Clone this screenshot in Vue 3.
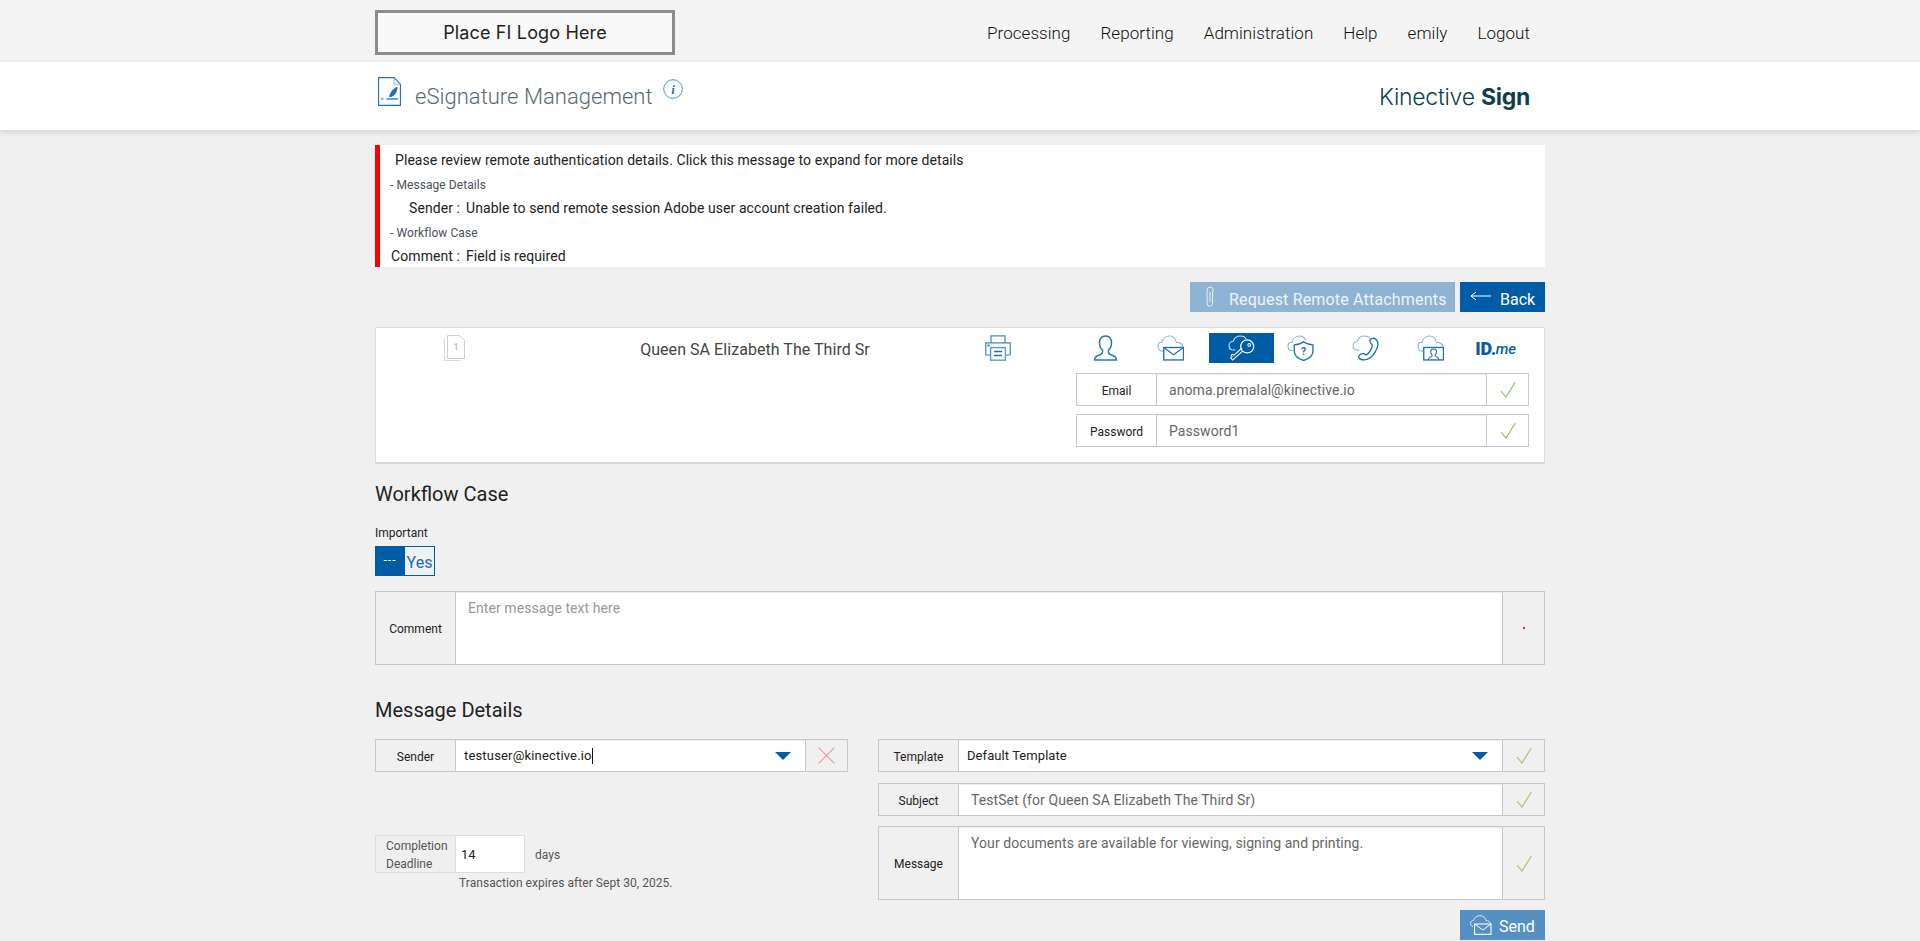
<script setup>
const navItems = ['Processing', 'Reporting', 'Administration', 'Help', 'emily', 'Logout']
</script>

<template>
  <div class="page">
    <div class="topbar">
      <div class="wrap topbar-in">
        <div class="logo">Place FI Logo Here</div>
        <nav class="nav"><a v-for="n in navItems" :key="n">{{ n }}</a></nav>
      </div>
    </div>

    <header class="head">
      <div class="wrap head-in">
        <svg class="title-ic" viewBox="0 0 23 29" fill="none">
          <path d="M.6.6h15.500l6.300 6.600v21.200H.6z" stroke="#1f6fb5" stroke-width="1.100"/>
          <path d="M16 .6v6.600h6.400" stroke="#7fb0da" stroke-width=".9"/>
          <path d="M8.500 22h11.500" stroke="#1f6fb5" stroke-width="1.300"/>
          <path d="M3 20.500l2.500 2.500M5.500 20.500L3 23" stroke="#1f6fb5" stroke-width=".7"/>
          <path d="M11 20.500c.5-4 3-8.500 8.500-11 0 5-2 8.500-6 10.500l-1.300-.3z" fill="#1f6fb5"/>
        </svg>
        <h1 class="title">eSignature Management</h1>
        <svg class="info" viewBox="0 0 20 20" fill="none">
          <circle cx="10" cy="10" r="9.300" stroke="#4a94cc" stroke-width="1"/>
          <text x="10" y="14.500" text-anchor="middle" class="info-t">i</text>
        </svg>
        <div class="brand">Kinective <b>Sign</b></div>
      </div>
    </header>

    <main class="wrap">
      <section class="alert">
        <div class="a-main">Please review remote authentication details. Click this message to expand for more details</div>
        <div class="a-group">- Message Details</div>
        <div class="a-row"><span class="a-label">Sender :</span><span>Unable to send remote session Adobe user account creation failed.</span></div>
        <div class="a-group">- Workflow Case</div>
        <div class="a-row"><span class="a-label">Comment :</span><span>Field is required</span></div>
      </section>

      <div class="actions">
        <button class="btn btn-req">
          <svg class="clip" viewBox="0 0 10 22" fill="none"><path d="M7.500 6v11.500a2.700 2.700 0 0 1-5.400 0V4a3 3 0 0 1 6 0v2" stroke="#e6eff7" stroke-width="1"/><path d="M5 6v10" stroke="#e6eff7" stroke-width="1"/></svg>
          Request Remote Attachments
        </button>
        <button class="btn btn-back">
          <svg class="arrow" viewBox="0 0 21 10" fill="none"><path d="M21 5H1M6 1L1 5l5 4" stroke="#fff" stroke-width="1"/></svg>
          Back
        </button>
      </div>

      <section class="card">
        <div class="doc-col">
          <svg class="pages" viewBox="0 0 21 26" fill="none">
            <path d="M.5 3.500v22h16" stroke="#d8d8d8" stroke-width="1"/>
            <path d="M3.500.5h12l5 5v18h-17z" stroke="#cfcfcf" stroke-width="1"/>
            <text x="12" y="15" text-anchor="middle" class="page-n">1</text>
          </svg>
        </div>
        <div class="name-col">Queen SA Elizabeth The Third Sr</div>
        <div class="print-col">
          <svg class="printer" viewBox="0 0 26 26" fill="none">
            <path d="M6 8V.8h14V8" stroke="#3d86c4" stroke-width="1.200"/>
            <path d="M5 20H.8V7.800h24.400V20H21" stroke="#3d86c4" stroke-width="1.200"/>
            <rect x="5.600" y="12.600" width="14.800" height="12.600" fill="#fff" stroke="#5d9bcf" stroke-width="1.400"/>
            <path d="M9 16.500h8M9 20.500h8" stroke="#1f6fb5" stroke-width="1.500"/>
            <rect x="2.500" y="9.500" width="2" height="2" fill="#2f7cc0"/>
          </svg>
        </div>
        <div class="auth-col">
          <div class="tabs">
            <div class="tab">
              <svg class="t-ic" viewBox="0 0 24 26" fill="none"><path d="M12 1C8 1 6 4 6 8c0 3 1 5.500 3 7v2c0 1.500-1 2.300-3 3-3 1-5 2-5 5h22c0-3-2-4-5-5-2-.7-3-1.500-3-3v-2c2-1.500 3-4 3-7 0-4-2-7-6-7z" stroke="#2a75b8" stroke-width="1.500"/></svg>
            </div>
            <div class="tab">
              <svg class="t-ic" viewBox="0 0 26 25" fill="none">
                <path d="M6 15.500H4.500C2 15 1 13 1 10.800 1 8.500 2.600 7 4.800 7 5.500 3.500 8.500 1 12 1c3.500 0 6 2.500 6.500 6 3.500 0 6 1.500 6.500 4.500" stroke="#7fb2dc" stroke-width="1"/>
                <rect x="6.500" y="12" width="19" height="12" fill="#fff" stroke="#1f6fb5" stroke-width="1.300"/>
                <path d="M6.500 12l9.500 7 9.500-7" stroke="#1f6fb5" stroke-width="1.200"/>
              </svg>
            </div>
            <div class="tab tab-on">
              <svg class="t-ic" viewBox="0 0 26 25" fill="none">
                <path d="M7 14.500H5.500C2.500 14.500 1 12.500 1 10 1 7.500 3 6 5 6c1-3 3.500-5 7-5 2.500 0 4.500 1 5.500 3" stroke="#cfe0ef" stroke-width="1"/>
                <circle cx="18.500" cy="11" r="6.300" stroke="#fff" stroke-width="1.200"/>
                <circle cx="20.500" cy="9.500" r="1.400" stroke="#fff" stroke-width="1"/>
                <path d="M14 15.500L4.500 24 2.500 22l1.500-1.500-1-1 1.500-1 1 1 8-7" stroke="#fff" stroke-width="1"/>
              </svg>
            </div>
            <div class="tab">
              <svg class="t-ic" viewBox="0 0 26 25" fill="none">
                <path d="M6 15H4.500C2 15 1 13 1 10.500 1 8.500 2.600 7 4.800 7 5.500 3.500 8.500 1 12 1c2.500 0 5 1.500 6 4" stroke="#7fb2dc" stroke-width="1"/>
                <path d="M16 6.500c2.500 2 5.500 2.800 9 3v6c0 4-3.500 7.500-9 9-5.500-1.500-9-5-9-9v-6c3.500-.2 6.500-1 9-3z" fill="#fff" stroke="#1f6fb5" stroke-width="1.300"/>
                <text x="16" y="19.500" text-anchor="middle" class="q">?</text>
              </svg>
            </div>
            <div class="tab">
              <svg class="t-ic" viewBox="0 0 26 25" fill="none">
                <path d="M7 14.500H5C2.500 14.500 1 12.500 1 10.200 1 7.800 3 6.500 4.800 6.500 5.800 3 8.500 1 12 1c2.500 0 4.800 1 6 3" stroke="#7fb2dc" stroke-width="1"/>
                <path d="M17.500 4.500c1.500-1.200 4-1.800 5.500-.5 2.500 2.500 2.500 7-.5 12-2.800 5-7 8-11 8-3 0-5.500-1.600-5-3.500.4-1.600 3-3 5-2.500 1 .3 1 1.500 2.500.8 2.500-1.300 4.500-5 5.500-8 .4-1.500-.5-1.800-1.500-3-.5-.8-1.300-2-.5-2.800z" stroke="#1f6fb5" stroke-width="1.300"/>
              </svg>
            </div>
            <div class="tab">
              <svg class="t-ic" viewBox="0 0 26 25" fill="none">
                <path d="M6 15.500H4.500C2 15 1 13 1 10.800 1 8.500 2.600 7 4.800 7 5.500 3.500 8.500 1 12 1c3.500 0 6 2.500 6.500 6 3.500 0 6 1.500 6.500 4.500" stroke="#7fb2dc" stroke-width="1"/>
                <rect x="6.500" y="12" width="19" height="12" fill="#fff" stroke="#1f6fb5" stroke-width="1.300"/>
                <path d="M11 24c0-2.500 1.500-3 3.500-3.700v-1.300c-1-.8-1.300-1.700-1.300-3 0-1.500 1-2.500 2.800-2.500s2.800 1 2.800 2.500c0 1.300-.3 2.200-1.300 3v1.300c2 .7 3.500 1.200 3.500 3.700" stroke="#1f6fb5" stroke-width="1"/>
              </svg>
            </div>
            <div class="tab idme"><b>ID.</b><i>me</i></div>
          </div>
          <div class="row">
            <div class="r-label">Email</div>
            <div class="r-val">anoma.premalal@kinective.io</div>
            <div class="r-mark">
              <svg class="check" viewBox="0 0 16 17" fill="none"><path d="M1 10l5 6L15.300 1" stroke="#8cc05c" stroke-width="1.100"/></svg>
            </div>
          </div>
          <div class="row row-2">
            <div class="r-label">Password</div>
            <div class="r-val">Password1</div>
            <div class="r-mark">
              <svg class="check" viewBox="0 0 16 17" fill="none"><path d="M1 10l5 6L15.300 1" stroke="#8cc05c" stroke-width="1.100"/></svg>
            </div>
          </div>
        </div>
      </section>

      <h2 class="h-case">Workflow Case</h2>
      <div class="imp">Important</div>
      <div class="toggle"><span class="t-off">---</span><span class="t-yes">Yes</span></div>
      <div class="row grey comment">
        <div class="r-label">Comment</div>
        <div class="r-val area placeholder">Enter message text here</div>
        <div class="r-mark"><span class="req"></span></div>
      </div>

      <h2 class="h-msg">Message Details</h2>
      <div class="cols">
        <div class="col-l">
          <div class="row grey">
            <div class="r-label">Sender</div>
            <div class="r-val sel sender"><span>testuser@kinective.io</span><span class="caret"></span><span class="drop"></span></div>
            <div class="r-mark">
              <svg class="cross" viewBox="0 0 17 17" fill="none"><path d="M.6.6l15.800 15.800M16.400.6L.6 16.400" stroke="#e8949c" stroke-width="1.100"/></svg>
            </div>
          </div>
          <div class="deadline">
            <div class="d-label">Completion Deadline</div>
            <div class="d-input">14</div>
            <div class="d-days">days</div>
          </div>
          <div class="expire">Transaction expires after Sept 30, 2025.</div>
        </div>
        <div class="col-r">
          <div class="row grey">
            <div class="r-label">Template</div>
            <div class="r-val sel tpl"><span>Default Template</span><span class="drop"></span></div>
            <div class="r-mark">
              <svg class="check" viewBox="0 0 16 17" fill="none"><path d="M1 10l5 6L15.300 1" stroke="#a8bb6a" stroke-width="1.100"/></svg>
            </div>
          </div>
          <div class="row grey gap-s">
            <div class="r-label">Subject</div>
            <div class="r-val">TestSet (for Queen SA Elizabeth The Third Sr)</div>
            <div class="r-mark">
              <svg class="check" viewBox="0 0 16 17" fill="none"><path d="M1 10l5 6L15.300 1" stroke="#a8bb6a" stroke-width="1.100"/></svg>
            </div>
          </div>
          <div class="row grey message">
            <div class="r-label">Message</div>
            <div class="r-val area">Your documents are available for viewing, signing and printing.</div>
            <div class="r-mark">
              <svg class="check" viewBox="0 0 16 17" fill="none"><path d="M1 10l5 6L15.300 1" stroke="#a8bb6a" stroke-width="1.100"/></svg>
            </div>
          </div>
          <div class="send-wrap">
            <button class="btn btn-send">
              <svg class="send-ic" viewBox="0 0 22 20" fill="none">
                <path d="M3 11.500C1 11 .6 9.500.6 8.300.6 6.500 2 5.300 3.500 5.300 4.500 2.500 7 .6 10 .6c3 0 5.500 2 6 5 2 .1 4 1 4.500 2.800" stroke="#d9e8f4" stroke-width="1"/>
                <rect x="4.600" y="9" width="16.400" height="10.300" fill="#5590c2" stroke="#fff" stroke-width="1.100"/>
                <path d="M4.600 9l8.200 6 8.200-6" stroke="#fff" stroke-width="1"/>
              </svg>
              Send
            </button>
          </div>
        </div>
      </div>
    </main>
  </div>
</template>

<style>
html, body { margin: 0; height: 100%; overflow: hidden; background: #f0f0f0; }
</style>

<style scoped>
.page { font-family: Roboto, "Liberation Sans", sans-serif; color: #222; background: #f0f0f0; height: 941px; overflow: hidden; }
.wrap { width: 1170px; margin: 0 auto; }
.topbar { background: #f4f4f4; height: 62px; }
.topbar-in { display: flex; align-items: center; justify-content: space-between; height: 65px; }
.logo { width: 300px; height: 45px; box-sizing: border-box; border: 3px solid #8c8c8c; background: #f9f9f9; font: 18px/39px Inter, sans-serif; letter-spacing: .15px; text-align: center; color: #222; }
.nav { display: flex; gap: 30px; padding-right: 15px; font-size: 17px; font-weight: 300; color: #111; letter-spacing: .05px; }
.head { background: #fff; height: 68px; box-shadow: 0 2px 6px rgba(0, 0, 0, .14); position: relative; }
.head-in { display: flex; align-items: flex-start; height: 68px; }
.title-ic { width: 23px; height: 29px; margin: 15px 0 0 3px; }
.title { margin: 17px 0 0 14px; font-size: 22px; line-height: 36px; font-weight: 300; color: #5a6a75; letter-spacing: .03px; }
.info { width: 20px; height: 20px; margin: 17px 0 0 10px; }
.info-t { font: italic 700 13px "Liberation Serif", serif; fill: #1f6fb5; }
.brand { margin: 18px 15px 0 auto; font: 300 23px/34px Inter, sans-serif; color: #0e3f4a; letter-spacing: -.27px; }
.brand b { font-weight: 700; }

.alert { margin-top: 15px; height: 122px; box-sizing: border-box; border-left: 5px solid #f00; background: #fff; padding-top: 3px; overflow: hidden; line-height: 24px; font-size: 14px; color: #222; letter-spacing: .07px; }
.a-main { padding-left: 15px; }
.a-group { padding: 2px 0 0 10px; line-height: 22px; font-size: 12px; color: #4c5259; }
.a-row { display: flex; }
.a-label { width: 80px; margin-right: 6px; text-align: right; }

.actions { display: flex; justify-content: flex-end; gap: 5px; margin-top: 15px; }
.btn { height: 30px; border: 0; padding: 2px 0 0; font: 16px Roboto, sans-serif; color: #fff; display: flex; align-items: center; }
.actions .btn { padding-top: 4px; }
.btn-req { width: 265px; background: #8fb4d3; color: #edf3f8; padding-left: 15px; letter-spacing: .18px; }
.clip { width: 10px; height: 22px; margin: -4px 14px 0 0; }
.btn-back { width: 85px; background: #005ca6; padding-left: 10px; }
.arrow { width: 21px; height: 10px; margin: -6px 9px 0 0; }

.card { display: flex; height: 137px; box-sizing: border-box; margin-top: 15px; padding-top: 5px; border: 1px solid #dcdcdc; border-bottom: 2px solid #d8d8d8; background: #fff; }
.doc-col { width: 157px; display: flex; justify-content: center; padding-top: 2px; box-sizing: border-box; }
.pages { width: 21px; height: 26px; }
.page-n { font: 700 9px Roboto, sans-serif; fill: #c4c4c4; }
.name-col { width: 444px; text-align: center; font-size: 16px; line-height: 34px; color: #444; letter-spacing: .05px; }
.print-col { width: 99px; box-sizing: border-box; padding: 2px 0 0 8px; }
.printer { width: 26px; height: 26px; }
.auth-col { width: 453px; }
.tabs { display: flex; margin-left: 3px; }
.tab { flex: none; width: 65px; height: 30px; box-sizing: border-box; padding-right: 12px; display: flex; align-items: center; justify-content: center; }
.t-ic { width: 27px; height: 26px; }
.tab-on { background: #005ca6; padding-right: 0; }
.q { font: 700 10px Roboto, sans-serif; fill: #1f6fb5; }
.idme { color: #0a5ca8; font-size: 18px; line-height: 20px; letter-spacing: -.3px; padding-top: 2px; }
.idme b { font-weight: 900; }
.idme i { font-size: 15px; font-weight: 500; }

.row { display: flex; height: 33px; box-sizing: border-box; border: 1px solid #c8c8c8; background: #fff; margin-top: 10px; }
.row-2 { margin-top: 8px; }
.r-label { width: 79px; flex: none; box-sizing: content-box; border-right: 1px solid #c8c8c8; padding-top: 2px; display: flex; align-items: center; justify-content: center; font-size: 12px; color: #222; }
.r-val { flex: 1; min-width: 0; padding-left: 12px; font-size: 14px; line-height: 33px; letter-spacing: .07px; color: #666; box-shadow: inset 0 2px 1px -1px rgba(0, 0, 0, .08); background: #fff; }
.r-mark { width: 41px; flex: none; border-left: 1px solid #c8c8c8; display: flex; align-items: center; justify-content: center; }
.check { width: 16px; height: 17px; }
.grey { background: #f0f0f0; margin-top: 0; }

.h-case, .h-msg { margin: 14px 0 0; padding-top: 1px; font-size: 20px; line-height: 30px; font-weight: 400; color: #222; }
.h-msg { margin-top: 29px; }
.imp { margin-top: 16px; font-size: 12px; line-height: 16px; color: #222; }
.toggle { display: flex; width: 60px; height: 30px; margin-top: 5px; }
.t-off { width: 30px; background: #005ca6; color: #fff; font-size: 12px; letter-spacing: 1px; line-height: 28px; text-align: center; }
.t-yes { width: 30px; box-sizing: border-box; border: 1px solid #005ca6; border-left: 0; background: #f0f0f0; color: #1a6cb0; font-size: 16px; line-height: 32px; text-align: center; }
.comment { height: 74px; margin-top: 15px; }
.area { line-height: 22px; padding-top: 5px; }
.placeholder { color: #999; }
.req { width: 2px; height: 2px; background: #d8344a; }

.cols { display: flex; gap: 30px; margin-top: 14px; }
.col-l { width: 473px; }
.col-r { width: 667px; }
.sel { display: flex; align-items: center; font-size: 13px; color: #222; padding-right: 14px; }
.sender { padding-left: 8px; letter-spacing: .17px; }
.tpl { padding-left: 8px; font-size: 13px; }
.drop { margin-left: auto; width: 0; height: 0; border-left: 8px solid transparent; border-right: 8px solid transparent; border-top: 8px solid #005ca6; }
.caret { width: 1px; height: 16px; background: #111; }
.cross { width: 17px; height: 17px; }
.deadline { display: flex; margin-top: 63px; height: 38px; }
.d-label { width: 80px; box-sizing: border-box; border: 1px solid #dedede; border-right: 0; padding: 1px 0 0 10px; font-size: 12px; line-height: 18px; color: #555; background: #efefef; }
.d-input { width: 70px; box-sizing: border-box; border: 1px solid #dedede; background: #fff; padding-left: 5px; font-size: 13px; line-height: 38px; color: #222; }
.d-days { margin-left: 10px; font-size: 12px; line-height: 40px; color: #555; }
.expire { margin: 2px 0 0 84px; font-size: 12px; line-height: 16px; color: #555; letter-spacing: .05px; }
.gap-s { margin-top: 11px; }
.message { height: 74px; margin-top: 10px; }
.message .r-val { line-height: 22px; }
.send-wrap { display: flex; justify-content: flex-end; margin-top: 10px; }
.btn-send { width: 85px; background: #5590c2; padding-left: 10px; }
.send-ic { width: 22px; height: 20px; margin: -2px 7px 0 0; }
</style>
